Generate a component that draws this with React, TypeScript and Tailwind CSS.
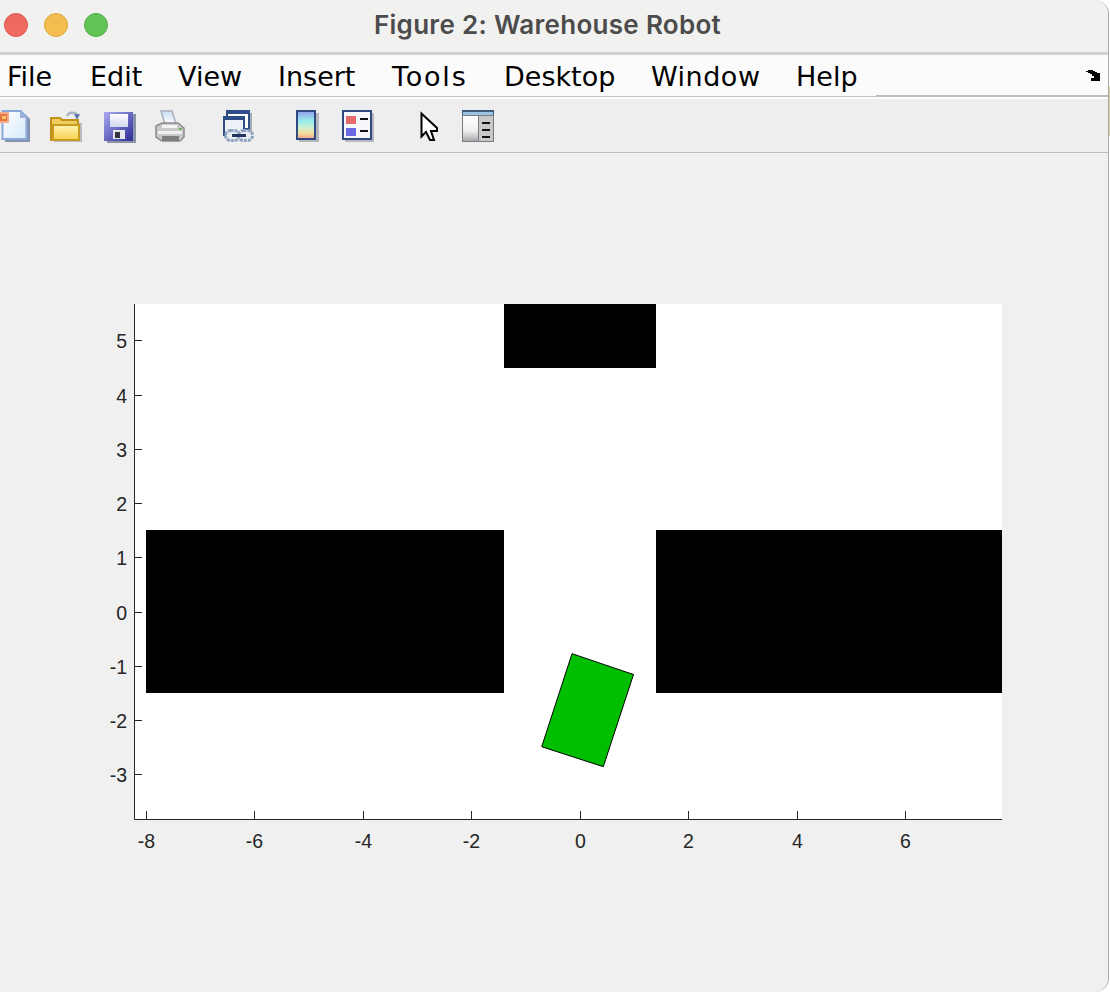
const menuItems = [
  { label: "File", className: "w-[83px]" },
  { label: "Edit", className: "w-[88px]" },
  { label: "View", className: "w-[100px]" },
  { label: "Insert", className: "w-[114px]" },
  { label: "Tools", className: "w-[112px] tracking-[1.800px]" },
  { label: "Desktop", className: "w-[147px]" },
  { label: "Window", className: "w-[145px] tracking-[0.500px]" },
  { label: "Help", className: "w-[70px]" },
];
const xTicks = [-8, -6, -4, -2, 0, 2, 4, 6];
const yTicks = [5, 4, 3, 2, 1, 0, -1, -2, -3];

const xPos = (v: number) => Math.round(579.6 + v * 54.25) + 0.5;
const yPos = (v: number) => Math.round(611.5 - v * 54.25) + 0.5;

function NewIcon() {
  return (
    <svg width="32" height="34" viewBox="0 0 32 34" className="shrink-0">
      <defs>
        <linearGradient id="paper" x1="0" y1="0" x2="1" y2="1">
          <stop offset="0" stopColor="#ffffff" />
          <stop offset="1" stopColor="#d5e8fb" />
        </linearGradient>
      </defs>
      <path d="M5 5h20l5 5v23H5z" fill="#8492ad" />
      <path d="M2.500 2h18l6 6v22h-24z" fill="url(#paper)" stroke="#8ba8dc" strokeWidth="2" />
      <path d="M20 2v7h7z" fill="#9db2d8" />
      <rect x="-2" y="3" width="11" height="11" fill="#f3a98c" />
      <rect x="0" y="5" width="7" height="7" fill="#e8743f" />
      <rect x="2" y="7" width="4" height="3" fill="#f4c66a" />
    </svg>
  );
}

function OpenIcon() {
  return (
    <svg width="34" height="34" viewBox="0 0 34 34" className="ml-[16px] shrink-0">
      <defs>
        <linearGradient id="folder" x1="0" y1="0" x2="0" y2="1">
          <stop offset="0" stopColor="#fff6b0" />
          <stop offset="1" stopColor="#f7d050" />
        </linearGradient>
      </defs>
      <path d="M19 7c2-4 6-4 10-2" fill="none" stroke="#a9b4c6" strokeWidth="2.500" />
      <path d="M26 5h6l-3 6z" fill="#5f7ba8" />
      <rect x="6" y="14" width="28" height="19" fill="#b9bcc2" />
      <path d="M3 9h9l2 2h16v20H3z" fill="#f0cd5c" stroke="#c0921a" strokeWidth="2" />
      <path d="M5 16h26v15H5z" fill="url(#folder)" stroke="#c89a1e" strokeWidth="2" />
    </svg>
  );
}

function SaveIcon() {
  return (
    <svg width="34" height="34" viewBox="0 0 34 34" className="ml-[20px] shrink-0">
      <defs>
        <linearGradient id="disk" x1="0" y1="0" x2="1" y2="1">
          <stop offset="0" stopColor="#a9a9f0" />
          <stop offset="1" stopColor="#2c2c96" />
        </linearGradient>
        <linearGradient id="label" x1="0" y1="0" x2="0" y2="1">
          <stop offset="0" stopColor="#ffffff" />
          <stop offset="1" stopColor="#cfd6ee" />
        </linearGradient>
      </defs>
      <rect x="5" y="5" width="29" height="29" fill="#8b93a8" />
      <rect x="2" y="3" width="29" height="29" fill="url(#disk)" />
      <rect x="8" y="5" width="18" height="13" fill="url(#label)" />
      <rect x="11" y="21" width="12" height="9" fill="#e6e6ee" />
      <rect x="13" y="23" width="5" height="6" fill="#333340" />
    </svg>
  );
}

function PrintIcon() {
  return (
    <svg width="32" height="34" viewBox="0 0 32 34" className="ml-[18px] shrink-0">
      <defs>
        <linearGradient id="sheet" x1="0" y1="0" x2="0" y2="1">
          <stop offset="0" stopColor="#c6dcf6" />
          <stop offset="1" stopColor="#ffffff" />
        </linearGradient>
      </defs>
      <path d="M7 2h11l4 13H11z" fill="url(#sheet)" stroke="#a9b0ba" strokeWidth="1.500" />
      <path d="M2 17l6-3h16l6 5v9l-4 4H8l-6-4z" fill="#c9c9c9" stroke="#8a8a8a" strokeWidth="1.500" />
      <rect x="8" y="16" width="15" height="3" fill="#f4f4f4" />
      <rect x="4" y="22" width="24" height="3" fill="#efefef" />
      <rect x="25" y="19" width="3" height="2" fill="#6cae5c" />
      <rect x="8" y="27" width="17" height="5" fill="#7e7e7e" />
    </svg>
  );
}

function LinkIcon() {
  return (
    <svg width="36" height="34" viewBox="0 0 36 34" className="ml-[34px] shrink-0">
      <rect x="30" y="4" width="2" height="20" fill="#a7acb5" />
      <rect x="7" y="2" width="22" height="18" fill="#ffffff" stroke="#2f4d86" strokeWidth="2" />
      <rect x="6" y="1" width="24" height="4" fill="#2f4d86" />
      <rect x="4" y="8" width="20" height="18" fill="#eef1f7" stroke="#2f4d86" strokeWidth="2" />
      <rect x="3" y="7" width="22" height="4" fill="#2f4d86" />
      <rect x="5.500" y="21.500" width="14" height="10" rx="5" fill="#e8ecf3" stroke="#8fa3c0" strokeWidth="3" strokeDasharray="3 1" />
      <rect x="18.500" y="21.500" width="14" height="10" rx="5" fill="#e8ecf3" stroke="#8fa3c0" strokeWidth="3" strokeDasharray="3 1" />
      <rect x="12" y="25" width="14" height="3" fill="#24365f" />
    </svg>
  );
}

function ColorbarIcon() {
  return (
    <svg width="26" height="34" viewBox="0 0 26 34" className="ml-[39px] shrink-0">
      <defs>
        <linearGradient id="bar" x1="0" y1="0" x2="0" y2="1">
          <stop offset="0" stopColor="#8f9cec" />
          <stop offset="0.350" stopColor="#97ecec" />
          <stop offset="0.600" stopColor="#cdf0cf" />
          <stop offset="0.800" stopColor="#f4dd9a" />
          <stop offset="1" stopColor="#ef9c8c" />
        </linearGradient>
      </defs>
      <rect x="4" y="4" width="20" height="29" fill="#b4b7bd" />
      <rect x="2" y="2" width="18" height="28" fill="url(#bar)" stroke="#2f4a80" strokeWidth="2" />
    </svg>
  );
}

function LegendIcon() {
  return (
    <svg width="34" height="34" viewBox="0 0 34 34" className="ml-[20px] shrink-0">
      <rect x="4" y="4" width="29" height="29" fill="#b4b7bd" />
      <rect x="2" y="2" width="28" height="28" fill="#f5f7fb" stroke="#2f4a80" strokeWidth="2" />
      <rect x="5" y="7" width="10" height="8" fill="#e66a6a" />
      <rect x="5" y="19" width="10" height="8" fill="#6a6ae6" />
      <rect x="19" y="9" width="8" height="2" fill="#111111" />
      <rect x="19" y="21" width="8" height="2" fill="#111111" />
    </svg>
  );
}

function CursorIcon() {
  return (
    <svg width="22" height="34" viewBox="0 0 22 34" className="ml-[44px] shrink-0">
      <path
        d="M2.500 4.500V27.500L7 23L11 31H15L12 22H18V19z"
        fill="#ffffff"
        stroke="#000000"
        strokeWidth="2"
        strokeLinejoin="miter"
      />
    </svg>
  );
}

function PanelIcon() {
  return (
    <svg width="34" height="34" viewBox="0 0 34 34" className="ml-[20px] shrink-0">
      <defs>
        <linearGradient id="pane" x1="0" y1="0" x2="0" y2="1">
          <stop offset="0" stopColor="#ffffff" />
          <stop offset="0.600" stopColor="#eeeeee" />
          <stop offset="1" stopColor="#a8a8a8" />
        </linearGradient>
      </defs>
      <rect x="1" y="1" width="32" height="32" fill="#747c86" />
      <rect x="1" y="1" width="32" height="5" fill="#3d5a78" />
      <rect x="2" y="3" width="30" height="3" fill="#9cc3e2" />
      <rect x="2" y="7" width="15" height="25" fill="url(#pane)" />
      <rect x="18" y="7" width="14" height="25" fill="#c8c8c8" />
      <rect x="21" y="13" width="8" height="2" fill="#111111" />
      <rect x="21" y="20" width="8" height="2" fill="#111111" />
      <rect x="21" y="27" width="8" height="2" fill="#111111" />
    </svg>
  );
}

function Plot() {
  return (
    <svg
      width="930"
      height="570"
      viewBox="100 295 930 570"
      className="ml-[100px] mt-[142px] block"
      fontFamily="'Liberation Sans', Arial, sans-serif"
      fontSize="19.500"
      fill="#262626"
    >
      <rect x="134" y="304" width="868" height="515" fill="#ffffff" />
      <rect x="504" y="304" width="152" height="64" fill="#000000" />
      <rect x="146" y="530" width="358" height="163" fill="#000000" />
      <rect x="656" y="530" width="346" height="163" fill="#000000" />
      <polygon
        points="572,653.700 633.500,674.500 603.300,766.700 541.700,746.700"
        fill="#00bf00"
        stroke="#000000"
        strokeWidth="1"
      />
      <path d="M134.500 304V819.500H1002" fill="none" stroke="#262626" strokeWidth="1" />
      {yTicks.map((v) => (
        <g key={v}>
          <line x1="135" x2="142" y1={yPos(v)} y2={yPos(v)} stroke="#262626" />
          <text x="127" y={yPos(v) + 7} textAnchor="end">
            {v}
          </text>
        </g>
      ))}
      {xTicks.map((v) => (
        <g key={v}>
          <line x1={xPos(v)} x2={xPos(v)} y1="811" y2="819" stroke="#262626" />
          <text x={xPos(v)} y="848" textAnchor="middle">
            {v}
          </text>
        </g>
      ))}
    </svg>
  );
}

export default function App() {
  return (
    <div className="relative w-[1110px] h-[992px] overflow-hidden bg-white">
      <div className="w-[1109px] h-full flex flex-col bg-[#f0f0f0] rounded-tr-[14px] rounded-br-[14px] border-r border-r-[#a8a8a8] overflow-hidden">
        {/* title bar */}
        <div className="relative h-[55px] shrink-0 flex items-center bg-[#f1f1f0] border-b-[3px] border-b-[#d2d2d0] pb-[3px]">
          <div className="flex gap-[16px] pl-[4px]">
            <span className="w-6 h-6 rounded-full bg-[#ee6a5f] border border-[#d9574d]" />
            <span className="w-6 h-6 rounded-full bg-[#f5bd4f] border border-[#dfa63c]" />
            <span className="w-6 h-6 rounded-full bg-[#61c454] border border-[#52ad46]" />
          </div>
          <div
            className="absolute left-0 right-0 top-[11px] text-center text-[#4c4c4c] text-[26px] leading-[28px] font-semibold tracking-[0.3px] ml-[-13px]"
            style={{ fontFamily: "Inter, sans-serif" }}
          >
            Figure 2: Warehouse Robot
          </div>
        </div>

        {/* menu bar */}
        <div className="relative h-[42px] shrink-0 flex items-start bg-[#fbfbfb] border-b border-b-[#c4c4c4]">
          <div
            className="flex pl-[7px] pt-[3px] text-[27px] leading-[38px] text-black"
            style={{ fontFamily: "'DejaVu Sans', sans-serif" }}
          >
            {menuItems.map((item) => (
              <span key={item.label} className={item.className}>
                {item.label}
              </span>
            ))}
          </div>
          <svg width="14" height="11" viewBox="0 0 14 11" className="absolute left-[1086px] top-[15px]">
            <path d="M0 1h2V0h5v1h2v1h2v1h3v8H5V8h3V6H6V4H4V3H2V2H0z" fill="#000000" />
          </svg>
          <div className="absolute left-[876px] right-0 bottom-[-1px] h-[2px] bg-[#bcbcbc]" />
        </div>

        {/* toolbar */}
        <div className="h-[56px] shrink-0 flex items-start pt-[10px] bg-[#eeeeee] border-t-[2px] border-t-white border-b border-b-[#bdbdbd]">
          <NewIcon />
          <OpenIcon />
          <SaveIcon />
          <PrintIcon />
          <LinkIcon />
          <ColorbarIcon />
          <LegendIcon />
          <CursorIcon />
          <PanelIcon />
        </div>

        <Plot />
      </div>
      {/* sliver of the desktop behind the window */}
      <div className="absolute right-0 top-[86px] w-px h-[50px] bg-[#d8d8ac]" />
    </div>
  );
}
